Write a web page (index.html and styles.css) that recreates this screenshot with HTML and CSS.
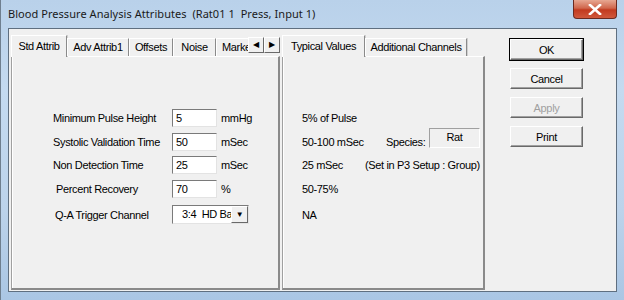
FILE: index.html
```html
<!DOCTYPE html>
<html lang="en">
<head>
  <meta charset="UTF-8">
  <title>Blood Pressure Analysis Attributes</title>
  <link rel="stylesheet" href="styles.css">
</head>
<body>
  <div class="window">
    <!-- Title bar -->
    <div class="titlebar">
      <span class="title">Blood Pressure Analysis Attributes&nbsp; (Rat01 1&nbsp; Press, Input 1)</span>
      <button class="close-btn">
        <svg width="14" height="11" viewBox="0 0 14 11">
          <path d="M2 1 L12 10 M12 1 L2 10" stroke="#fff" stroke-width="2.6" stroke-linecap="square"/>
        </svg>
      </button>
    </div>

    <div class="client">
      <!-- Left tab control -->
      <div class="tabctl left-tabs">
        <div class="tabstrip">
          <div class="tabs">
            <div class="tab active w-std">Std Attrib</div>
            <div class="tab w-adv">Adv Attrib1</div>
            <div class="tab w-off">Offsets</div>
            <div class="tab w-noise">Noise</div>
            <div class="tab w-mark">Markers</div>
          </div>
          <div class="spin">
            <div class="spin-btn">&#9664;</div>
            <div class="spin-btn">&#9654;</div>
          </div>
        </div>
        <div class="panel">
          <div class="form">
            <div class="row">
              <span class="label">Minimum Pulse Height</span>
              <span class="edit">5</span>
              <span class="unit">mmHg</span>
            </div>
            <div class="row">
              <span class="label">Systolic Validation Time</span>
              <span class="edit">50</span>
              <span class="unit">mSec</span>
            </div>
            <div class="row">
              <span class="label">Non Detection Time</span>
              <span class="edit">25</span>
              <span class="unit">mSec</span>
            </div>
            <div class="row">
              <span class="label indent">Percent Recovery</span>
              <span class="edit">70</span>
              <span class="unit">%</span>
            </div>
            <div class="row combo-row">
              <span class="label indent2">Q-A Trigger Channel</span>
              <span class="combo">
                <span class="combo-text">3:4&nbsp; HD Bas</span>
                <span class="combo-btn">&#9660;</span>
              </span>
            </div>
          </div>
        </div>
      </div>

      <!-- Right tab control -->
      <div class="tabctl right-tabs">
        <div class="tabstrip">
          <div class="tabs">
            <div class="tab active w-typ">Typical Values</div>
            <div class="tab w-add">Additional Channels</div>
          </div>
        </div>
        <div class="panel">
          <div class="typical">
            <div class="trow">5% of Pulse</div>
            <div class="trow">
              <span class="tval">50-100 mSec</span>
              <span class="species">Species:</span>
              <span class="species-box">Rat</span>
            </div>
            <div class="trow">
              <span class="tval short">25 mSec</span>
              <span>(Set in P3 Setup : Group)</span>
            </div>
            <div class="trow">50-75%</div>
            <div class="trow last">NA</div>
          </div>
        </div>
      </div>

      <!-- Buttons -->
      <div class="buttons">
        <button class="btn default">OK</button>
        <button class="btn">Cancel</button>
        <button class="btn" disabled>Apply</button>
        <button class="btn">Print</button>
      </div>
    </div>
  </div>
</body>
</html>
```

FILE: styles.css
```css
* {
  margin: 0;
  padding: 0;
  box-sizing: border-box;
}

body {
  width: 624px;
  height: 300px;
  overflow: hidden;
  font-family: "Liberation Sans", Arial, sans-serif;
  font-size: 11px;
  letter-spacing: -0.35px;
  color: #000;
}

.window {
  width: 624px;
  height: 300px;
  display: flex;
  flex-direction: column;
  padding: 0 7px 8px 7px;
  background: linear-gradient(180deg, #b9d1ea 0%, #c4daf0 30%, #bcd3eb 70%, #aac6e4 100%);
  border-left: 1px solid #6f7f8f;
}

.titlebar {
  height: 28px;
  display: flex;
  align-items: flex-start;
  justify-content: space-between;
}

.title {
  font-family: "Noto Sans", "Liberation Sans", sans-serif;
  font-size: 11px;
  letter-spacing: 0.05px;
  color: #1a1a1a;
  margin-top: 6px;
  white-space: pre;
}

.close-btn {
  width: 44px;
  height: 19px;
  border: 1px solid #6b2a20;
  border-top: none;
  border-radius: 0 0 4px 4px;
  background: linear-gradient(180deg, #e7a792 0%, #d0674d 45%, #c23a1f 55%, #d0583c 100%);
  display: flex;
  align-items: center;
  justify-content: center;
}

.client {
  flex: 1;
  display: flex;
  align-items: stretch;
  background: #f0f0f0;
  border: 1px solid #5f6f80;
  padding: 6px 0 1px 2px;
}

.tabctl {
  display: flex;
  flex-direction: column;
}

.left-tabs {
  width: 269px;
}

.right-tabs {
  width: 203px;
  margin-left: 2px;
}

.tabstrip {
  height: 21px;
  display: flex;
  align-items: flex-start;
  position: relative;
  z-index: 1;
}

.tabs {
  flex: 1;
  display: flex;
  overflow: hidden;
  white-space: nowrap;
}

.tab {
  height: 18px;
  margin-top: 3px;
  line-height: 16px;
  text-align: center;
  border-top: 1px solid #fff;
  border-left: 1px solid #fff;
  border-right: 1px solid #8a8a8a;
  box-shadow: 1px 0 0 #d0d0d0;
  background: #f0f0f0;
  flex-shrink: 0;
}

.tab.active {
  height: 22px;
  margin-top: 0;
  padding-top: 2px;
}

.w-std { width: 56px; }
.w-adv { width: 62px; }
.w-off { width: 44px; }
.w-noise { width: 43px; }
.w-mark { width: 50px; text-align: left; padding-left: 5px; }
.w-typ { width: 83px; }
.w-add { width: 102px; }

.spin {
  display: flex;
  margin-top: 2px;
}

.spin-btn {
  width: 16px;
  height: 16px;
  font-size: 8px;
  line-height: 14px;
  text-align: center;
  background: #f0f0f0;
  border-top: 1px solid #fff;
  border-left: 1px solid #fff;
  border-right: 1px solid #696969;
  border-bottom: 1px solid #696969;
}

.panel {
  flex: 1;
  border-top: 1px solid #fff;
  border-left: 1px solid #a0a0a0;
  border-right: 2px solid #8a8a8a;
  border-bottom: 2px solid #8a8a8a;
  box-shadow: inset 1px 0 0 #fff;
}

.form {
  display: flex;
  flex-direction: column;
  gap: 5.5px;
  padding: 52px 0 0 41px;
}

.row {
  display: flex;
  align-items: center;
  height: 18px;
}

.label {
  width: 119px;
  white-space: nowrap;
}

.label.indent {
  padding-left: 3px;
}

.label.indent2 {
  padding-left: 2px;
}

.edit {
  width: 45px;
  height: 18px;
  background: #fff;
  border-top: 1px solid #7a7a7a;
  border-left: 1px solid #7a7a7a;
  border-bottom: 1px solid #e3e3e3;
  border-right: 1px solid #e3e3e3;
  padding: 0 3px;
  line-height: 16px;
}

.unit {
  margin-left: 4px;
}

.combo-row {
  margin-top: 2px;
  height: 19px;
}

.combo {
  width: 77px;
  height: 19px;
  display: flex;
  background: #fff;
  border-top: 1px solid #7a7a7a;
  border-left: 1px solid #7a7a7a;
  border-bottom: 1px solid #e3e3e3;
  border-right: 1px solid #e3e3e3;
}

.combo-text {
  flex: 1;
  overflow: hidden;
  white-space: nowrap;
  padding-left: 9px;
  line-height: 17px;
}

.combo-btn {
  width: 17px;
  font-size: 8px;
  line-height: 16px;
  text-align: center;
  background: #f0f0f0;
  border-top: 1px solid #fff;
  border-left: 1px solid #fff;
  border-right: 1px solid #696969;
  border-bottom: 1px solid #696969;
}

.typical {
  display: flex;
  flex-direction: column;
  gap: 5.5px;
  padding: 52px 0 0 19px;
}

.trow {
  height: 18px;
  display: flex;
  align-items: center;
  white-space: nowrap;
}

.trow.last {
  margin-top: 3px;
}

.tval {
  width: 84px;
}

.tval.short {
  width: 63px;
}

.species {
  width: 43px;
}

.species-box {
  width: 51px;
  height: 20px;
  margin-top: -8px;
  text-align: center;
  line-height: 16px;
  border-top: 1px solid #a0a0a0;
  border-left: 1px solid #a0a0a0;
  border-bottom: 1px solid #fff;
  border-right: 1px solid #fff;
}

.buttons {
  display: flex;
  flex-direction: column;
  gap: 8px;
  margin-left: 25px;
  padding-top: 4px;
}

.btn {
  width: 73px;
  height: 21px;
  font-family: "Liberation Sans", Arial, sans-serif;
  font-size: 11px;
  letter-spacing: -0.35px;
  color: #000;
  background: #f0f0f0;
  border-top: 1px solid #fff;
  border-left: 1px solid #fff;
  border-right: 1px solid #696969;
  border-bottom: 1px solid #696969;
  box-shadow: inset -1px -1px 0 #a0a0a0;
}

.btn.default {
  outline: 1px solid #000;
}

.btn:disabled {
  color: #a0a0a0;
}
```
